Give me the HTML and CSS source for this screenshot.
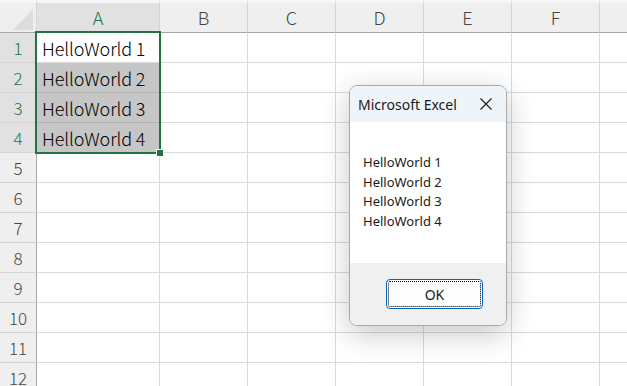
FILE: index.html
```html
<!DOCTYPE html>
<html lang="en">
<head>
  <meta charset="UTF-8">
  <title>Microsoft Excel</title>
  <link rel="stylesheet" href="styles.css">
</head>
<body>
  <div class="sheet">
    <div class="corner">
      <svg width="36" height="30" viewBox="0 0 36 30"><polygon points="13,27 33,27 33,6" fill="#dcdcdc"/></svg>
    </div>
    <div class="ch sel">A</div><div class="ch">B</div><div class="ch">C</div><div class="ch">D</div><div class="ch">E</div><div class="ch">F</div><div class="ch"></div>

    <div class="rh sel">1</div><div class="c">HelloWorld 1</div><div class="c"></div><div class="c"></div><div class="c"></div><div class="c"></div><div class="c"></div><div class="c"></div>
    <div class="rh sel">2</div><div class="c hl">HelloWorld 2</div><div class="c"></div><div class="c"></div><div class="c"></div><div class="c"></div><div class="c"></div><div class="c"></div>
    <div class="rh sel">3</div><div class="c hl">HelloWorld 3</div><div class="c"></div><div class="c"></div><div class="c"></div><div class="c"></div><div class="c"></div><div class="c"></div>
    <div class="rh sel">4</div><div class="c hl">HelloWorld 4</div><div class="c"></div><div class="c"></div><div class="c"></div><div class="c"></div><div class="c"></div><div class="c"></div>
    <div class="rh">5</div><div class="c"></div><div class="c"></div><div class="c"></div><div class="c"></div><div class="c"></div><div class="c"></div><div class="c"></div>
    <div class="rh">6</div><div class="c"></div><div class="c"></div><div class="c"></div><div class="c"></div><div class="c"></div><div class="c"></div><div class="c"></div>
    <div class="rh">7</div><div class="c"></div><div class="c"></div><div class="c"></div><div class="c"></div><div class="c"></div><div class="c"></div><div class="c"></div>
    <div class="rh">8</div><div class="c"></div><div class="c"></div><div class="c"></div><div class="c"></div><div class="c"></div><div class="c"></div><div class="c"></div>
    <div class="rh">9</div><div class="c"></div><div class="c"></div><div class="c"></div><div class="c"></div><div class="c"></div><div class="c"></div><div class="c"></div>
    <div class="rh">10</div><div class="c"></div><div class="c"></div><div class="c"></div><div class="c"></div><div class="c"></div><div class="c"></div><div class="c"></div>
    <div class="rh">11</div><div class="c"></div><div class="c"></div><div class="c"></div><div class="c"></div><div class="c"></div><div class="c"></div><div class="c"></div>
    <div class="rh">12</div><div class="c"></div><div class="c"></div><div class="c"></div><div class="c"></div><div class="c"></div><div class="c"></div><div class="c"></div>

    <div class="selection"><span class="handle"></span></div>
  </div>

  <div class="msgbox">
    <div class="msg-title">
      <span>Microsoft Excel</span>
      <svg class="close" width="14" height="14" viewBox="0 0 14 14"><path d="M1.5 1.5 L12.5 12.5 M12.5 1.5 L1.5 12.5" stroke="#1b1b1b" stroke-width="1.1" fill="none"/></svg>
    </div>
    <div class="msg-body">
      <div>HelloWorld 1</div>
      <div>HelloWorld 2</div>
      <div>HelloWorld 3</div>
      <div>HelloWorld 4</div>
    </div>
    <div class="msg-foot">
      <button class="ok-btn">OK</button>
    </div>
  </div>
</body>
</html>
```

FILE: styles.css
```css
body {
  margin: 0;
  background: #fff;
  overflow: hidden;
  font-family: "Noto Sans CJK JP", "Noto Sans", sans-serif;
}

.sheet {
  position: relative;
  display: grid;
  grid-template-columns: 37px 123px repeat(5, 88px) 88px;
  grid-template-rows: 33px repeat(12, 30px);
  width: 688px;
}

.sheet > div {
  box-sizing: border-box;
}

.corner {
  background: #efefef;
  border-top: 3px solid #f7f7f7;
  border-right: 1px solid #d4d4d4;
  border-bottom: 1px solid #a8a8a8;
}

.corner svg {
  display: block;
}

.ch {
  display: flex;
  align-items: center;
  justify-content: center;
  background: #efefef;
  border-top: 3px solid #f7f7f7;
  border-right: 1px solid #d4d4d4;
  border-bottom: 1px solid #a8a8a8;
  color: #444;
  font-size: 18px;
  font-weight: 300;
  padding-bottom: 2px;
}

.ch.sel {
  background: #e1e1e1;
  color: #217346;
}

.rh {
  display: flex;
  align-items: center;
  justify-content: center;
  background: #efefef;
  border-right: 1px solid #a8a8a8;
  border-bottom: 1px solid #d4d4d4;
  color: #444;
  font-size: 17px;
  font-weight: 300;
}

.rh.sel {
  background: #e1e1e1;
  color: #217346;
}

.c {
  display: flex;
  align-items: center;
  padding-left: 5px;
  border-right: 1px solid #dadada;
  border-bottom: 1px solid #dadada;
  color: #000;
  font-size: 18px;
  font-weight: 300;
  letter-spacing: -0.1px;
  white-space: nowrap;
}

.c.hl {
  background: #c6c6c6;
  border-bottom-color: #b0b0b0;
}

.selection {
  position: absolute;
  left: 35px;
  top: 31px;
  width: 126px;
  height: 123px;
  box-sizing: border-box;
  border: 2px solid #217346;
}

.handle {
  position: absolute;
  right: -5px;
  bottom: -5px;
  width: 6px;
  height: 6px;
  background: #217346;
  border: 1px solid #fff;
}

.msgbox {
  position: absolute;
  left: 349px;
  top: 85px;
  width: 158px;
  height: 241px;
  box-sizing: border-box;
  display: flex;
  flex-direction: column;
  border: 1px solid #a9a9a9;
  border-radius: 8px;
  overflow: hidden;
  background: #fff;
  box-shadow: 0 8px 30px rgba(0,0,0,0.22);
  font-family: "Noto Sans", sans-serif;
  color: #1a1a1a;
}

.msg-title {
  height: 36px;
  display: flex;
  align-items: center;
  justify-content: space-between;
  padding: 0 13px 0 8px;
  background: #eef4f8;
  font-size: 14px;
}

.close {
  display: block;
}

.msg-body {
  flex: 1;
  padding: 31px 0 0 13px;
  font-size: 13px;
  line-height: 19.6px;
}

.msg-foot {
  height: 62px;
  display: flex;
  align-items: center;
  justify-content: flex-end;
  padding-right: 23px;
  background: #f0f0f0;
}

.ok-btn {
  width: 97px;
  height: 30px;
  border: 1px solid #0067c0;
  border-radius: 4px;
  outline: 1px dotted #000;
  outline-offset: -3px;
  background: #fdfdfd;
  font-family: "Noto Sans", sans-serif;
  font-size: 14px;
  color: #1a1a1a;
}
```
